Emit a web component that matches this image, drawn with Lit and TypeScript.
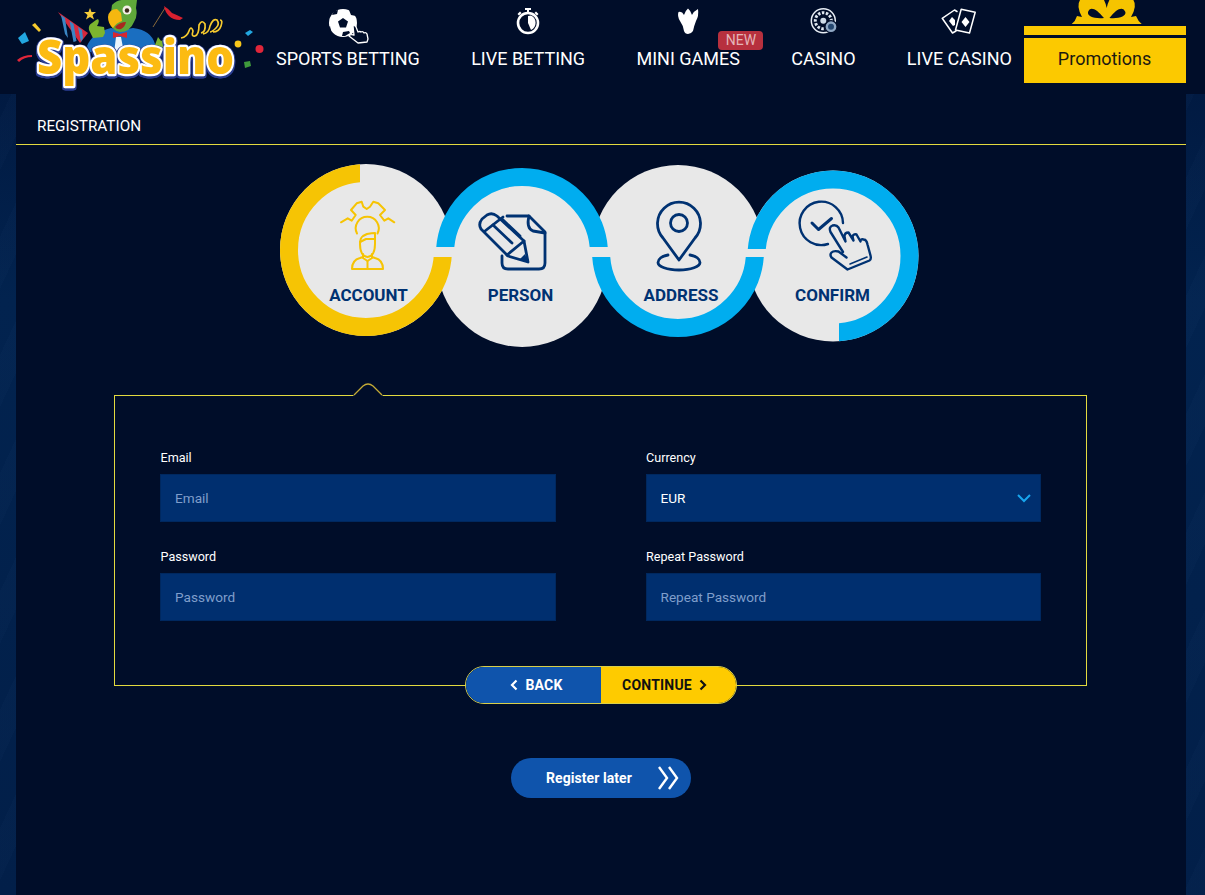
import { LitElement, html, css, svg } from "lit";
import { customElement } from "lit/decorators.js";

const NAVY = "#003272";

const logo = html`<svg class="logo" viewBox="16 0 250 90" width="250" height="90" aria-label="Spassino">
  <path d="M18 38l7-6 4 9-7 3z" fill="#22a7e0"/>
  <path d="M32 25l3-2 6 7-2 2z" fill="#f7cb2e"/>
  <path d="M17 60q6-5 15-5l0 2q-8 0-13 5z" fill="#e0263a"/>
  <path d="M245 33l5-3 3 2-5 4z" fill="#22a7e0"/>
  <circle cx="238" cy="44" r="3.4" fill="#f7c61a"/>
  <circle cx="259.500" cy="49" r="4" fill="#e0263a"/>
  <path d="M244 62l6-1 1 5-6 2z" fill="#3f9a3c"/>

  <path d="M58 12L88 33L80 43z" fill="#d8283c"/>
  <path d="M61 15l4 3 3 20-3-4zM69.500 21l4 3 3 17-3 1zM78 27l4 3 1 8-2 4z" fill="#3a86c4"/>
  <path d="M90 8l1.500 4 4.500 0-3.500 3 1.500 4.500-4-2.500-4 2.500 1.500-4.500-3.500-3 4.500 0z" fill="#f5cc3a"/>

  <path d="M87 46q6-14 24-18l10 2 12-2q18 2 22 16l2 8H90z" fill="#1a6ec0"/>
  <path d="M116 37h5l3 16h-10z" fill="#eaf3fb"/>
  <path d="M113 32l7 2 7-2v6l-7-2-7 2z" fill="#d8262f"/>
  <path d="M89 30q-1-5 3-7l4-3 2-1q2 2-1 7l7 1 1 6-2 4-10 1z" fill="#7cb52f"/>
  <path d="M155 45l3-8 3 4 5-3 4 4-4 8-6 4-5-2z" fill="#7cb52f"/>

  <path d="M112 5q6-6 14-5h11l-1 8q2 8-2 14-4 10-14 10-10-2-10-12z" fill="#5fa83a"/>
  <path d="M117 9q-8 0-9 8 0 7 5 11 3-5 9-7l-1-8z" fill="#f5b70f"/>
  <path d="M115 27q5-5 11-5-1 5-5 7-4 1-6-2z" fill="#a8281f"/>
  <circle cx="127" cy="10" r="4.500" fill="#f3efe6"/>
  <circle cx="127" cy="10.500" r="2.200" fill="#3a2a1a"/>

  <path d="M153 27l12-19" stroke="#8a6a3a" stroke-width="1"/>
  <path d="M164 6q5 3 8 7 5 2 11 5l-3 2q-7 0-11-4-4-4-5-10z" fill="#d8202f"/>
  <path d="M181 38q6-1 8-7t4 0q-2 6 2 5t4-11q3-6 6-1 1 8-4 9m2 1q6-1 7-8 3-8 7-6 3 4-1 8-4 4-6 4m3 0q6 0 8-6 2-6-1-6"
    fill="none" stroke="#f7cb2e" stroke-width="1.700"/>
  <text class="brand" x="37" y="74" textLength="197" lengthAdjust="spacingAndGlyphs">Spassino</text>
</svg>`;

const ball = svg`<circle cx="15" cy="15" r="14" fill="#fff"/>
  <path d="M15 10l5 3.500-2 6h-6l-2-6zM4 7l5-1 1-4-4 1zM21 2l2 5 5 1-3-5zM3 23l-1-5-1 1 1 4zM17 28l5-3-1-2-6 1-1 4z" fill="#000d29"/>
  <path d="M25 18q2-1 3 1l2 5q2-1 3 0 2-1 3 1 2-1 3 1l1 5-1 3-9 1-9-7q1-2 5-1z" fill="#000d29" stroke="#fff" stroke-width="1.300" stroke-linejoin="round"/>`;
const watch = svg`<circle cx="20" cy="15" r="10" fill="none" stroke="#fff" stroke-width="2.600"/>
  <path d="M20 8v7l3 7a8 8 0 0 0 0-14.500z" fill="#fff"/>
  <path d="M17 0h6v2h-2v2.500h-2v-2.500h-2zM28 3.500l2.500 2.500-1.500 1.500-2.500-2.500zM12 3.500l-2.500 2.500 1.500 1.500 2.500-2.500z" fill="#fff"/>`;
const claw = svg`<path d="M10.500 4Q14 3 16 7 17 3 20 .5 23 3 24 7 26 3 30 1 31 8 28 13 26 18 25 23 23 26 20 26 17 26 16 23 15 17 12 13 9 8 10.500 4z" fill="#fff"/>`;
const casino = svg`<circle cx="20.300" cy="12.700" r="12" fill="none" stroke="#e8eef5" stroke-width="1.500"/>
  <circle cx="20.300" cy="12.700" r="8" fill="none" stroke="#dfe7f0" stroke-width="3" stroke-dasharray="2.500 1.500"/>
  <circle cx="20.300" cy="12.700" r="3" fill="#cfdbe8"/>
  <circle cx="28" cy="18.700" r="6" fill="#8fa7c4" stroke="#000d29" stroke-width="1.200"/>
  <circle cx="28" cy="18.700" r="3" fill="#24466f"/>`;
const cards = svg`<g fill="none" stroke="#fff" stroke-width="1.500" stroke-linejoin="round" stroke-linecap="round">
  <path d="M18 3.500L15.500 2 3.200 10.300 13.500 25 17 23"/>
  <path d="M22.200 1.300L36.200 4.300 30.500 25 16.500 22z"/></g>
  <path d="M26.500 9l4 5-4 5-4-5zM13 9l3 3v5l-2 1-4-5z" fill="#fff"/>`;

const icons = { ball, watch, claw, casino, cards };

const nav: { label: string; icon: keyof typeof icons; badge?: string }[] = [
  { label: "SPORTS BETTING", icon: "ball" },
  { label: "LIVE BETTING", icon: "watch" },
  { label: "MINI GAMES", icon: "claw", badge: "NEW" },
  { label: "CASINO", icon: "casino" },
  { label: "LIVE CASINO", icon: "cards" },
];

const stepsGraphic = html`<svg class="steps" viewBox="270 155 660 200" width="660" height="200">
  <defs>
    <clipPath id="c1"><path d="M270 155H360V257H460V345H270z"/></clipPath>
    <clipPath id="c2"><rect x="430" y="160" width="190" height="87"/></clipPath>
    <clipPath id="c3"><rect x="585" y="257" width="185" height="90"/></clipPath>
    <clipPath id="c4"><path d="M740 160H925V350H839V249H740z"/></clipPath>
  </defs>
  <g fill="#e8e8e8">
    <circle cx="366" cy="250" r="86"/>
    <circle cx="522" cy="262" r="85"/>
    <circle cx="678" cy="250.500" r="85.500"/>
    <circle cx="833" cy="256" r="85.500"/>
  </g>
  <g fill="none" stroke-width="18">
    <circle cx="366" cy="250" r="77" stroke="#f6c404" clip-path="url(#c1)"/>
    <circle cx="522" cy="254" r="77" stroke="#00adef" clip-path="url(#c2)"/>
    <circle cx="678" cy="251" r="77" stroke="#00adef" clip-path="url(#c3)"/>
    <circle cx="833" cy="256" r="76.500" stroke="#00adef" clip-path="url(#c4)"/>
  </g>

  <g fill="none" stroke="#f6c404" stroke-width="2" stroke-linejoin="round" stroke-linecap="round">
    <path d="M341 222.300L347.700 218.300 351.700 220.700 355.700 215 351 210 356.700 203.300 361.700 201.700 363.300 206.700 366.700 209 370 206.700 373.300 201.700 378.300 203.300 385 210 380 215 384.300 220.700 388.300 218.300 394.300 222.300"/>
    <path d="M357 233.500a11.500 11.500 0 1 1 20.500 0"/>
    <path d="M360 244q0-6 3-8l4-2q5-1 8-1v11q0 12-7.500 13-7.500-1-7.500-13z"/>
    <path d="M360 242l6-3h9"/>
    <path d="M363 254v4l4.500 3 4.500-3v-4"/>
    <path d="M352 269q0-9 8-11l3-1M383 269q0-9-8-11l-3-1M352 269h31M367.500 261v8"/>
  </g>

  <g fill="none" stroke="${NAVY}" stroke-width="2.800" stroke-linejoin="round" stroke-linecap="round">
    <path d="M507 216h22l16 16v31q0 6-6 6h-31q-6 0-6-6v-7"/>
    <path d="M529 216q-3 12 4 15l12 2"/>
    <path d="M497 216l27 25 4 21-20-6-27-27q-3-5 1-10l5-4q5-3 10 1z"/>
    <path d="M485 231l18-14M507 255l17-14"/>
    <path d="M493 225l19 18M502 219l18 17"/>
  </g>
  <path d="M528 262l-8-3 5-5z" fill="${NAVY}"/>

  <g fill="none" stroke="${NAVY}" stroke-width="2.800" stroke-linecap="round" stroke-linejoin="round">
    <path d="M679 260l-16-22a21.500 21.500 0 1 1 32 0z"/>
    <circle cx="679" cy="223" r="8.500"/>
    <path d="M668 255c-6 1-10 4-10 7.500 0 4 9 7.500 21 7.500s21-3.500 21-7.500c0-3.500-4-6.500-10-7.500"/>
  </g>

  <g fill="none" stroke="${NAVY}" stroke-width="2.400" stroke-linecap="round" stroke-linejoin="round">
    <path d="M843 223a21.700 21.700 0 1 0-15 21"/>
    <path d="M812 223l6.500 6.500 13-11" stroke-width="3"/>
    <path d="M843 252l-12.500-20q-2-5 2-6.500 4-1 6 2l7 14-1-5q0-4 4-4l5 8-1-4q1-3 4-2l4 7q0-3 3-2 3 0 4 5l3 11q1 4-1 5l-22 9-16-12q-2-3 0-5 2-2 7-1l8 6"/>
    <path d="M850 264l17-7" stroke-width="1.600"/>
  </g>

  <text class="step-label" x="368.500" y="301">ACCOUNT</text>
  <text class="step-label" x="520.500" y="301">PERSON</text>
  <text class="step-label" x="681" y="301">ADDRESS</text>
  <text class="step-label" x="832.500" y="301">CONFIRM</text>
</svg>`;

@customElement("app-root")
export class AppRoot extends LitElement {
  static styles = css`
    :host {
      display: block;
      width: 1205px;
      height: 895px;
      overflow: hidden;
      font-family: Roboto, "Liberation Sans", sans-serif;
      background:
        repeating-linear-gradient(115deg, rgba(120, 170, 230, 0.018) 0 22px, transparent 22px 50px),
        linear-gradient(180deg, #011a42 94px, #02234f 300px, #021f49 100%);
      color: #fff;
    }
    .header {
      height: 94px;
      background: #000d29;
      display: flex;
      align-items: flex-start;
      padding-left: 16px;
    }
    .logo { display: block; flex: 0 0 250px; width: 250px; margin-right: 10px; overflow: visible; }
    .brand {
      font-family: "Open Sans", sans-serif;
      font-weight: 800;
      font-size: 48px;
      fill: #fcbb12;
      stroke: #fff;
      stroke-width: 4.500px;
      paint-order: stroke;
      stroke-linejoin: round;
      filter: drop-shadow(0 2px 0 #2b3e92) drop-shadow(1px 0 0 #2b3e92) drop-shadow(-1px 0 0 #2b3e92);
    }
    .nav { display: flex; gap: 51.33px; }
    .item {
      position: relative;
      display: flex;
      flex-direction: column;
      align-items: center;
      padding-top: 8px;
      font-size: 18px;
      line-height: 21px;
      white-space: nowrap;
    }
    .item svg { display: block; width: 40px; height: 34px; margin-bottom: 5.5px; overflow: visible; }
    .badge {
      position: absolute;
      left: 82px;
      top: 31px;
      width: 45px;
      height: 19px;
      border-radius: 4px;
      background: #b7303e;
      color: #e4b4b8;
      font-size: 14px;
      line-height: 19px;
      text-align: center;
    }
    .promo {
      flex: 0 0 162px;
      margin-left: 11.700px;
      display: flex;
      flex-direction: column;
    }
    .bow { display: block; width: 162px; height: 24px; margin-bottom: 2px; }
    .strip { height: 9px; background: #fcc900; }
    .promo-box {
      margin-top: 3px;
      height: 45px;
      background: #fcc900;
      color: #1c1a10;
      font-size: 18px;
      line-height: 41px;
      text-align: center;
    }
    .main {
      margin: 0 19px 0 16px;
      background: #000d29;
      height: 801px;
      display: flex;
      flex-direction: column;
      align-items: center;
    }
    .title {
      align-self: stretch;
      height: 51px;
      box-sizing: border-box;
      padding: 23px 0 0 21px;
      font-size: 15.300px;
      line-height: 18px;
      border-bottom: 1px solid #e2d93f;
    }
    .steps { display: block; margin: 10px 2px 0 0; flex: none; }
    .step-label {
      font-family: Roboto, sans-serif;
      font-weight: 700;
      font-size: 17px;
      fill: #003272;
      text-anchor: middle;
    }
    .form-box {
      position: relative;
      box-sizing: border-box;
      width: 973px;
      height: 291px;
      margin: 40px 1px 0 0;
      border: 1px solid #e2d93f;
      padding: 54px 45px 0;
      display: grid;
      grid-template-columns: 396px 395.500px;
      column-gap: 89.500px;
      row-gap: 26px;
      grid-auto-rows: 73px;
    }
    .notch {
      position: absolute;
      left: 237px;
      top: -13px;
      width: 32px;
      height: 15px;
      display: block;
    }
    .field { display: flex; flex-direction: column; }
    label {
      font-size: 12.600px;
      line-height: 15px;
      margin: 0 0 9px 0.500px;
    }
    input, select {
      box-sizing: border-box;
      width: 100%;
      height: 48px;
      background: #002f6f;
      border: 1px solid #00285f;
      border-radius: 0;
      outline: none;
      padding: 0 14px;
      color: #fff;
      font: 13.600px Roboto, sans-serif;
      appearance: none;
    }
    input::placeholder { color: #7f9ecb; opacity: 1; }
    .select-wrap { position: relative; }
    .chevron { position: absolute; right: 9px; top: 18px; width: 16px; height: 12px; }
    .pair {
      position: relative;
      display: flex;
      width: 272px;
      height: 38px;
      margin-top: -20px;
      box-sizing: border-box;
      border: 1px solid #d9cf4a;
      border-radius: 19px;
      overflow: hidden;
      font-size: 14px;
      font-weight: 700;
    }
    .pair div {
      display: flex;
      align-items: center;
      justify-content: center;
      gap: 7px;
      letter-spacing: 0.2px;
    }
    .back { flex: 0 0 135px; box-sizing: border-box; background: #0f54ac; color: #fff; padding-left: 6px; }
    .cont { flex: 1; box-sizing: border-box; background: #fecb00; color: #111; padding-right: 8px; }
    .chev { width: 8px; height: 12px; display: block; }
    .later {
      display: flex;
      align-items: center;
      width: 180px;
      height: 40px;
      margin-top: 54px;
      border-radius: 20px;
      background: #0f54ac;
      font-size: 14px;
      font-weight: 700;
      letter-spacing: 0.07px;
      box-sizing: border-box;
      padding-left: 35px;
    }
    .later svg { display: block; width: 22px; height: 26px; margin-left: 25px; }
  `;

  render() {
    return html`
      <div class="header">
        ${logo}
        <nav class="nav">
          ${nav.map(
            (n) => html`<div class="item">
              <svg viewBox="0 0 40 34">${icons[n.icon]}</svg>
              ${n.label}
              ${n.badge ? html`<span class="badge">${n.badge}</span>` : ""}
            </div>`
          )}
        </nav>
        <div class="promo">
          <svg class="bow" viewBox="0 0 162 24">
            <path d="M47.700 24Q51.500 21 53 16L58 17Q52 6 56 0H80Q82 4 82.700 8 83.400 4 85.400 0H109.400Q113.400 6 107 17L112 16Q114 21 117.700 24z" fill="#f6c400"/>
            <path d="M80 18C72 8 66 6 64 12 63 16 70 19 80 18zM85.400 18C93 8 99 6 101.400 12 102.400 16 95 19 85.400 18z" fill="#000d29"/>
          </svg>
          <div class="strip"></div>
          <div class="promo-box">Promotions</div>
        </div>
      </div>
      <div class="main">
        <div class="title">REGISTRATION</div>
        ${stepsGraphic}
        <div class="form-box">
          <svg class="notch" viewBox="0 0 32 15">
            <path d="M0 14 L11 3 Q16 -1 21 3 L32 14 V15 H0z" fill="#000d29"/>
            <path d="M2 12 L11 3 Q16 -1 21 3 L30 12" fill="none" stroke="#c5ab36" stroke-width="1.300"/>
          </svg>
          <div class="field"><label>Email</label><input placeholder="Email" /></div>
          <div class="field">
            <label>Currency</label>
            <div class="select-wrap">
              <select><option>EUR</option></select>
              <svg class="chevron" viewBox="0 0 16 12"><path d="M2 3l6 6 6-6" fill="none" stroke="#17a6ee" stroke-width="2"/></svg>
            </div>
          </div>
          <div class="field"><label>Password</label><input placeholder="Password" /></div>
          <div class="field"><label>Repeat Password</label><input placeholder="Repeat Password" /></div>
        </div>
        <div class="pair">
          <div class="back">
            <svg class="chev" viewBox="0 0 8 12"><path d="M6.500 1.500L2 6l4.500 4.500" fill="none" stroke="#fff" stroke-width="2.200"/></svg>
            BACK
          </div>
          <div class="cont">
            CONTINUE
            <svg class="chev" viewBox="0 0 8 12"><path d="M1.500 1.500L6 6l-4.500 4.500" fill="none" stroke="#111" stroke-width="2.200"/></svg>
          </div>
        </div>
        <div class="later">
          Register later
          <svg viewBox="0 0 22 26"><path d="M2 2l8 11-8 11M12 2l8 11-8 11" fill="none" stroke="#fff" stroke-width="2.400"/></svg>
        </div>
      </div>
    `;
  }
}
